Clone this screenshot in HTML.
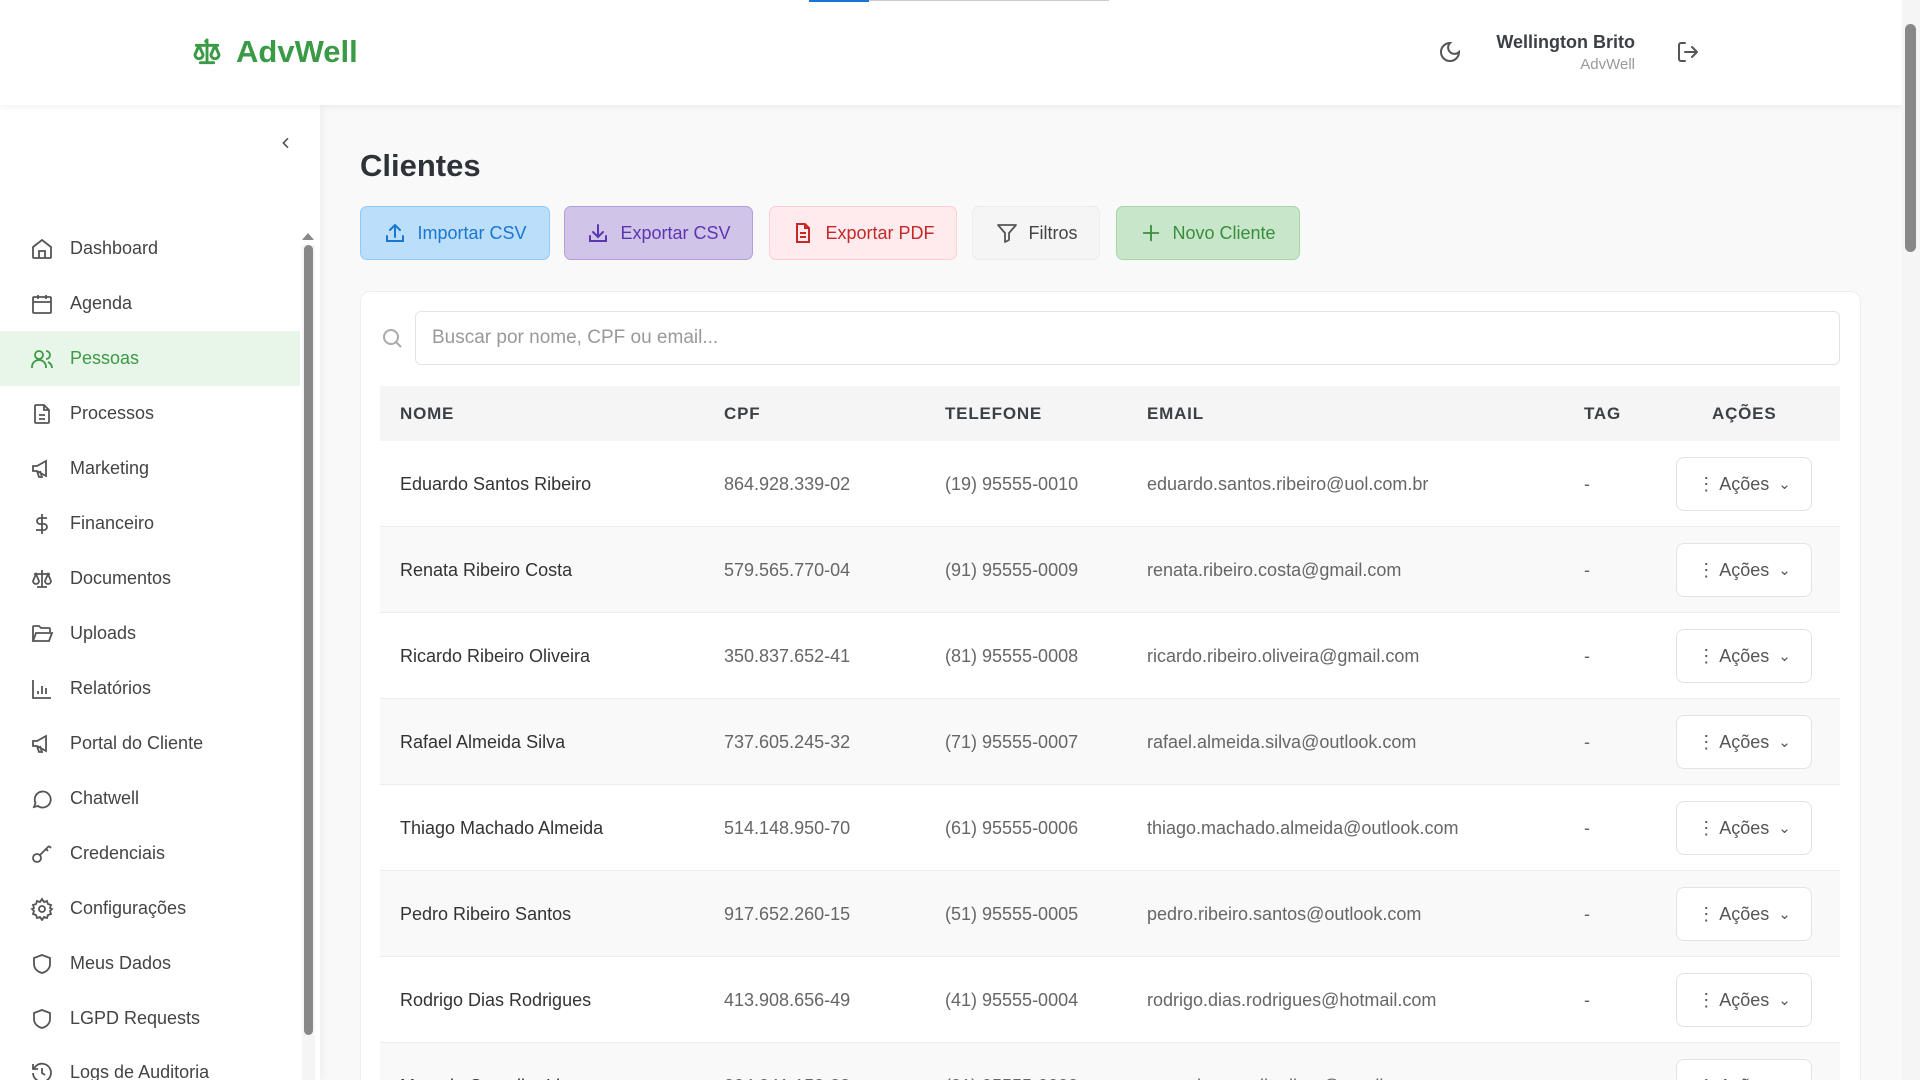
<!DOCTYPE html>
<html style="overflow:hidden;width:1920px;height:1080px"><head><meta charset="utf-8">
<style>
*{box-sizing:border-box;margin:0;padding:0}
body{width:1920px;height:1080px;overflow:hidden;font-family:"Liberation Sans",sans-serif;background:#f9f9f9;position:relative;color:#333}
#wrap{position:absolute;left:0;top:0;width:1920px;height:1080px;overflow:hidden}
.abs{position:absolute}
svg{display:block}
.hdr{left:0;top:0;width:1902px;height:105px;background:#fff;box-shadow:0 2px 6px rgba(0,0,0,.06);z-index:3}
.side{left:0;top:105px;width:320px;height:975px;background:#fff;box-shadow:2px 0 10px rgba(0,0,0,.05);z-index:2}
.nav{position:absolute;left:0;width:300px;height:55px;display:flex;align-items:center;font-size:18px;color:#444}
.nav svg{position:absolute;left:30px}
.nav span{position:absolute;left:70px}
.nav.act{background:#e8f5e9;color:#3a9a45}
.btn{position:absolute;top:206px;height:54px;border-radius:7px;border:1px solid;display:flex;align-items:center;justify-content:center;gap:10px;font-size:18px}
.card{left:360px;top:291px;width:1501px;height:800px;background:#fff;border:1px solid #eee;border-radius:10px}
.th{position:absolute;top:386px;left:380px;width:1460px;height:55px;background:#f5f5f5}
.th span{position:absolute;top:18px;font-size:17px;font-weight:bold;color:#3b4046;letter-spacing:.8px}
.row{position:absolute;left:380px;width:1460px;height:86px;border-bottom:1px solid #ececec;font-size:18px;color:#666}
.row.g{background:#f9f9f9}
.row span{position:absolute;top:33px}
.row .n{left:20px;color:#333}
.row .c{left:344px}.row .t{left:565px}.row .e{left:767px}.row .tg{left:1204px}
.ab{position:absolute;left:1296px;top:16px;width:136px;height:54px;background:#fff;border:1px solid #e3e3e3;border-radius:8px;display:flex;align-items:center;justify-content:center;gap:9px;color:#555;font-size:18px}
</style></head><body><div id="wrap">
<div class="abs" style="left:809px;top:0;width:60px;height:2px;background:#1976d2;z-index:5"></div>
<div class="abs" style="left:869px;top:0;width:240px;height:1px;background:#ccc;z-index:5"></div>
<div class="abs hdr">
 <svg class="abs" style="left:190px;top:36px" width="34" height="32" viewBox="0 0 24 24" fill="none" stroke="#3a9a45" stroke-width="2.2" stroke-linecap="round" stroke-linejoin="round"><path d="M12 3v17M7 20h10M4 7h16M12 3l-1 1M6 7l-3 7a3 3 0 0 0 6 0zM18 7l-3 7a3 3 0 0 0 6 0z"/></svg>
 <div class="abs" style="left:236px;top:34px;font-size:31px;font-weight:bold;color:#3a9a45">AdvWell</div>
 <svg class="abs" style="left:1438px;top:40px" width="24" height="24" viewBox="0 0 24 24" fill="none" stroke="#555" stroke-width="2" stroke-linecap="round"><path d="M12 3a6 6 0 0 0 9 9 9 9 0 1 1-9-9z"/></svg>
 <div class="abs" style="right:267px;top:32px;font-size:18px;font-weight:600;color:#3b4046;text-align:right;width:240px">Wellington Brito</div>
 <div class="abs" style="right:267px;top:56px;font-size:15px;color:#999;text-align:right;width:200px">AdvWell</div>
 <svg class="abs" style="left:1676px;top:40px" width="24" height="24" viewBox="0 0 24 24" fill="none" stroke="#555" stroke-width="2" stroke-linecap="round" stroke-linejoin="round"><path d="M9 21H5a2 2 0 0 1-2-2V5a2 2 0 0 1 2-2h4M16 17l5-5-5-5M21 12H9"/></svg>
</div>
<div class="abs" style="left:1902px;top:0;width:18px;height:1080px;background:#f5f5f5;z-index:4"><div style="position:absolute;left:3px;top:24px;width:11px;height:228px;background:#888;border-radius:6px"></div></div>
<div class="abs side">
 <svg class="abs" style="left:278px;top:30px" width="16" height="16" viewBox="0 0 24 24" fill="none" stroke="#555" stroke-width="2.4"><path d="M15 5l-7 7 7 7"/></svg>
 <div class="abs" style="left:302px;top:140px;width:13px;height:835px;background:#f5f5f5"></div>
 <div class="abs" style="left:304px;top:140px;width:9px;height:790px;background:#888;border-radius:5px"></div>
 <div class="abs" style="left:302px;top:122px;width:0;height:0;border:6px solid transparent;border-bottom:7px solid #888"></div>
</div>
<div style="position:absolute;left:0;top:0;z-index:2">
 <div class="nav" style="top:221px"><svg width="24" height="24" viewBox="0 0 24 24" fill="none" stroke="#555" stroke-width="1.8"><path d="M3 10l9-7 9 7v10a1 1 0 0 1-1 1H4a1 1 0 0 1-1-1zM9 21v-7h6v7"/></svg><span>Dashboard</span></div>
 <div class="nav" style="top:276px"><svg width="24" height="24" viewBox="0 0 24 24" fill="none" stroke="#555" stroke-width="1.8"><rect x="3" y="5" width="18" height="16" rx="1"/><path d="M3 10h18M8 3v4M16 3v4"/></svg><span>Agenda</span></div>
 <div class="nav act" style="top:331px"><svg width="24" height="24" viewBox="0 0 24 24" fill="none" stroke="#3a9a45" stroke-width="1.8"><circle cx="9" cy="8" r="4"/><path d="M2 21v-1a7 7 0 0 1 14 0v1M16 4a4 4 0 0 1 0 8M22 21a7 7 0 0 0-4-6"/></svg><span>Pessoas</span></div>
 <div class="nav" style="top:386px"><svg width="24" height="24" viewBox="0 0 24 24" fill="none" stroke="#555" stroke-width="1.8"><path d="M14 3H6a1 1 0 0 0-1 1v16a1 1 0 0 0 1 1h12a1 1 0 0 0 1-1V8zM14 3v5h5M9 13h6M9 17h6"/></svg><span>Processos</span></div>
 <div class="nav" style="top:441px"><svg width="24" height="24" viewBox="0 0 24 24" fill="none" stroke="#555" stroke-width="1.8"><path d="M3 9v5h4l9 5V4L7 9zM7 14l2 6h3l-2-6"/></svg><span>Marketing</span></div>
 <div class="nav" style="top:496px"><svg width="24" height="24" viewBox="0 0 24 24" fill="none" stroke="#555" stroke-width="1.8"><path d="M12 2v20M17 6H10a3 3 0 0 0 0 6h4a3 3 0 0 1 0 6H6"/></svg><span>Financeiro</span></div>
 <div class="nav" style="top:551px"><svg width="24" height="24" viewBox="0 0 24 24" fill="none" stroke="#555" stroke-width="1.8"><path d="M12 3v17M7 20h10M4 7h16M6 7l-3 7a3 3 0 0 0 6 0zM18 7l-3 7a3 3 0 0 0 6 0z"/></svg><span>Documentos</span></div>
 <div class="nav" style="top:606px"><svg width="24" height="24" viewBox="0 0 24 24" fill="none" stroke="#555" stroke-width="1.8"><path d="M3 19V5a1 1 0 0 1 1-1h5l2 2h8a1 1 0 0 1 1 1v3M3 19l3-8h16l-3 8z"/></svg><span>Uploads</span></div>
 <div class="nav" style="top:661px"><svg width="24" height="24" viewBox="0 0 24 24" fill="none" stroke="#555" stroke-width="1.8"><path d="M3 3v18h18M8 17v-3M12 17V9M16 17v-6"/></svg><span>Relatórios</span></div>
 <div class="nav" style="top:716px"><svg width="24" height="24" viewBox="0 0 24 24" fill="none" stroke="#555" stroke-width="1.8"><path d="M3 9v5h4l9 5V4L7 9zM7 14l2 6h3l-2-6"/></svg><span>Portal do Cliente</span></div>
 <div class="nav" style="top:771px"><svg width="24" height="24" viewBox="0 0 24 24" fill="none" stroke="#555" stroke-width="1.8"><path d="M4 20l1.5-4A8 8 0 1 1 8 19z"/></svg><span>Chatwell</span></div>
 <div class="nav" style="top:826px"><svg width="24" height="24" viewBox="0 0 24 24" fill="none" stroke="#555" stroke-width="1.8"><circle cx="7" cy="16" r="4"/><path d="M10 13l9-9M16 7l2 2M19 4l2 2"/></svg><span>Credenciais</span></div>
 <div class="nav" style="top:881px"><svg width="24" height="24" viewBox="0 0 24 24" fill="none" stroke="#555" stroke-width="1.8"><circle cx="12" cy="12" r="3"/><path d="M12 2l2 3 3-1 1 3 3 1-1 3 2 1-2 2 1 3-3 1-1 3-3-1-2 3-2-3-3 1-1-3-3-1 1-3-2-2 2-1-1-3 3-1 1-3 3 1z"/></svg><span>Configurações</span></div>
 <div class="nav" style="top:936px"><svg width="24" height="24" viewBox="0 0 24 24" fill="none" stroke="#555" stroke-width="1.8"><path d="M12 3l8 3v6c0 5-4 8-8 9-4-1-8-4-8-9V6z"/></svg><span>Meus Dados</span></div>
 <div class="nav" style="top:991px"><svg width="24" height="24" viewBox="0 0 24 24" fill="none" stroke="#555" stroke-width="1.8"><path d="M12 3l8 3v6c0 5-4 8-8 9-4-1-8-4-8-9V6z"/></svg><span>LGPD Requests</span></div>
 <div class="nav" style="top:1045px"><svg width="24" height="24" viewBox="0 0 24 24" fill="none" stroke="#555" stroke-width="1.8"><path d="M3 12a9 9 0 1 0 3-7L3 8M3 3v5h5M12 7v5l3 2"/></svg><span>Logs de Auditoria</span></div>
</div>

<div class="abs" style="left:360px;top:148px;font-size:31px;font-weight:bold;color:#2d3339">Clientes</div>
<div class="btn" style="left:360px;width:190px;background:#bbdefb;border-color:#90caf9;color:#1976d2"><svg width="24" height="24" viewBox="0 0 24 24" fill="none" stroke="#1976d2" stroke-width="2" stroke-linecap="round"><path d="M4 15v5h16v-5M12 16V4M7 9l5-5 5 5"/></svg>Importar CSV</div>
<div class="btn" style="left:564px;width:189px;background:#d1c4e9;border-color:#b39ddb;color:#5e35b1"><svg width="24" height="24" viewBox="0 0 24 24" fill="none" stroke="#5e35b1" stroke-width="2" stroke-linecap="round"><path d="M4 15v5h16v-5M12 4v12M7 11l5 5 5-5"/></svg>Exportar CSV</div>
<div class="btn" style="left:769px;width:188px;background:#ffebee;border-color:#ffcdd2;color:#c62828"><svg width="24" height="24" viewBox="0 0 24 24" fill="none" stroke="#c62828" stroke-width="2"><path d="M14 3H6v18h12V7zM14 3v4h4M9 12h6M9 16h6"/></svg>Exportar PDF</div>
<div class="btn" style="left:972px;width:128px;background:#f5f5f5;border-color:#ececec;color:#444"><svg width="24" height="24" viewBox="0 0 24 24" fill="none" stroke="#555" stroke-width="1.8" stroke-linejoin="round"><path d="M3 4h18l-7 8v7l-4 2v-9z"/></svg>Filtros</div>
<div class="btn" style="left:1116px;width:184px;background:#c8e6c9;border-color:#a5d6a7;color:#388e3c"><svg width="22" height="22" viewBox="0 0 24 24" fill="none" stroke="#388e3c" stroke-width="2" stroke-linecap="round"><path d="M12 4v16M4 12h16"/></svg>Novo Cliente</div>

<div class="abs card"></div>
<svg class="abs" style="left:380px;top:326px" width="24" height="24" viewBox="0 0 24 24" fill="none" stroke="#aaa" stroke-width="2"><circle cx="11" cy="11" r="7"/><path d="M16 16l5 5"/></svg>
<div class="abs" style="left:415px;top:311px;width:1425px;height:54px;border:1px solid #e3e3e3;border-radius:6px;background:#fff;font-size:19px;color:#999;padding:15px 0 0 16px">Buscar por nome, CPF ou email...</div>

<div class="th"><span style="left:20px">NOME</span><span style="left:344px">CPF</span><span style="left:565px">TELEFONE</span><span style="left:767px">EMAIL</span><span style="left:1204px">TAG</span><span style="left:1332px">AÇÕES</span></div>

<div class="row" style="top:441px"><span class="n">Eduardo Santos Ribeiro</span><span class="c">864.928.339-02</span><span class="t">(19) 95555-0010</span><span class="e">eduardo.santos.ribeiro@uol.com.br</span><span class="tg">-</span><div class="ab">⋮ Ações <small>⌄</small></div></div>
<div class="row g" style="top:527px"><span class="n">Renata Ribeiro Costa</span><span class="c">579.565.770-04</span><span class="t">(91) 95555-0009</span><span class="e">renata.ribeiro.costa@gmail.com</span><span class="tg">-</span><div class="ab">⋮ Ações <small>⌄</small></div></div>
<div class="row" style="top:613px"><span class="n">Ricardo Ribeiro Oliveira</span><span class="c">350.837.652-41</span><span class="t">(81) 95555-0008</span><span class="e">ricardo.ribeiro.oliveira@gmail.com</span><span class="tg">-</span><div class="ab">⋮ Ações <small>⌄</small></div></div>
<div class="row g" style="top:699px"><span class="n">Rafael Almeida Silva</span><span class="c">737.605.245-32</span><span class="t">(71) 95555-0007</span><span class="e">rafael.almeida.silva@outlook.com</span><span class="tg">-</span><div class="ab">⋮ Ações <small>⌄</small></div></div>
<div class="row" style="top:785px"><span class="n">Thiago Machado Almeida</span><span class="c">514.148.950-70</span><span class="t">(61) 95555-0006</span><span class="e">thiago.machado.almeida@outlook.com</span><span class="tg">-</span><div class="ab">⋮ Ações <small>⌄</small></div></div>
<div class="row g" style="top:871px"><span class="n">Pedro Ribeiro Santos</span><span class="c">917.652.260-15</span><span class="t">(51) 95555-0005</span><span class="e">pedro.ribeiro.santos@outlook.com</span><span class="tg">-</span><div class="ab">⋮ Ações <small>⌄</small></div></div>
<div class="row" style="top:957px"><span class="n">Rodrigo Dias Rodrigues</span><span class="c">413.908.656-49</span><span class="t">(41) 95555-0004</span><span class="e">rodrigo.dias.rodrigues@hotmail.com</span><span class="tg">-</span><div class="ab">⋮ Ações <small>⌄</small></div></div>
<div class="row g" style="top:1043px"><span class="n">Marcelo Carvalho Lima</span><span class="c">204.341.158-33</span><span class="t">(31) 95555-0003</span><span class="e">marcelo.carvalho.lima@gmail.com</span><span class="tg">-</span><div class="ab">⋮ Ações <small>⌄</small></div></div>
</div></body></html>
